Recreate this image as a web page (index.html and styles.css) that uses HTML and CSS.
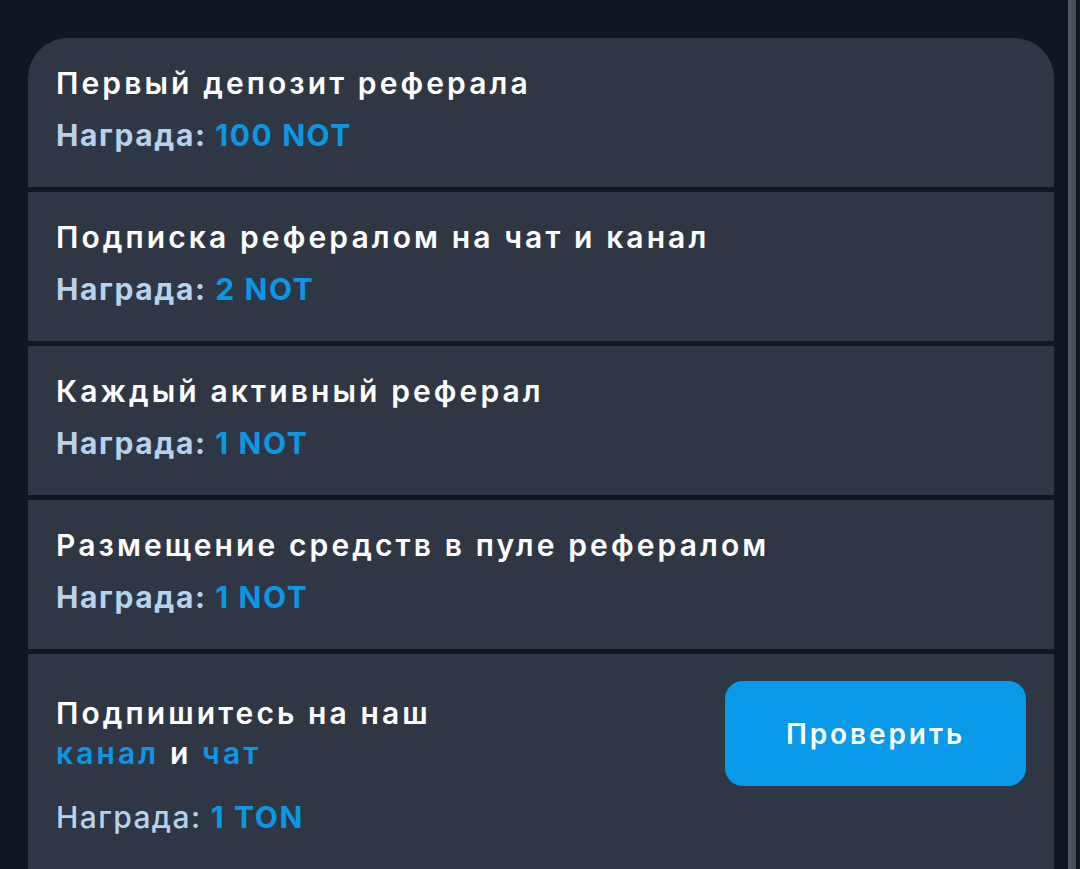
FILE: index.html
```html
<!DOCTYPE html>
<html lang="ru">
<head>
<meta charset="utf-8">
<link rel="stylesheet" href="styles.css">
</head>
<body>
<div class="page">
  <main class="content">
    <section class="list">
      <div class="item">
        <div class="title">Первый депозит реферала</div>
        <div class="reward">Награда: <span class="val">100 NOT</span></div>
      </div>
      <div class="item">
        <div class="title">Подписка рефералом на чат и канал</div>
        <div class="reward">Награда: <span class="val">2 NOT</span></div>
      </div>
      <div class="item">
        <div class="title">Каждый активный реферал</div>
        <div class="reward">Награда: <span class="val">1 NOT</span></div>
      </div>
      <div class="item">
        <div class="title">Размещение средств в пуле рефералом</div>
        <div class="reward">Награда: <span class="val">1 NOT</span></div>
      </div>
      <div class="item item-task">
        <div class="task-text">
          <div class="title task-title">Подпишитесь на наш<br><a class="link">канал</a> и <a class="link">чат</a></div>
          <div class="reward reward-light">Награда: <span class="val">1 TON</span></div>
        </div>
        <button class="btn">Проверить</button>
      </div>
    </section>
  </main>
  <div class="scrollbar"></div>
</div>
</body>
</html>
```

FILE: styles.css
```css
html, body {
  margin: 0;
  padding: 0;
  background: #111721;
  height: 100%;
  overflow: hidden;
}
body {
  font-family: "Inter", "Open Sans", sans-serif;
  color: #ffffff;
}
.page {
  display: flex;
  height: 869px;
}
.content {
  width: 1026px;
  padding: 38px 0 0 28px;
}
.list {
  display: flex;
  flex-direction: column;
  gap: 5px;
  border-radius: 40px 40px 0 0;
  overflow: hidden;
}
.item {
  background: #2f3745;
  height: 149px;
  box-sizing: border-box;
  padding: 25px 28px 0 28px;
}
.title {
  font-size: 30px;
  font-weight: 600;
  line-height: 40px;
  letter-spacing: 3.1px;
  color: #ffffff;
}
.reward {
  margin-top: 12px;
  font-size: 30px;
  font-weight: 700;
  line-height: 40px;
  letter-spacing: 1.6px;
  color: #b6d3eb;
}
.val {
  color: #0a97e6;
}
.item-task {
  height: 220px;
  display: flex;
  justify-content: space-between;
  align-items: flex-start;
  padding-top: 27px;
}
.task-text {
  padding-top: 12px;
}
.link {
  color: #0a97e6;
}
.reward-light {
  font-weight: 500;
  letter-spacing: 1.4px;
  margin-top: 24px;
}
.reward-light .val {
  font-weight: 700;
  letter-spacing: 1.6px;
}
.btn {
  width: 301px;
  height: 105px;
  border: none;
  border-radius: 18px;
  background: #0899e9;
  color: #ffffff;
  font-family: "Inter", "Open Sans", sans-serif;
  font-size: 28px;
  font-weight: 600;
  letter-spacing: 2.9px;
}
.scrollbar {
  margin-left: 14px;
  width: 8px;
  height: 869px;
  background: linear-gradient(to right, #585b63, #45484f);
}
```
